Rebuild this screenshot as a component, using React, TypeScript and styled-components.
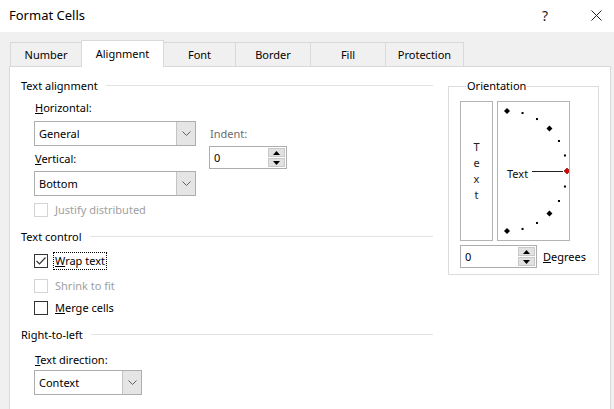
import * as React from 'react';
import styled, { createGlobalStyle } from 'styled-components';

const GlobalStyle = createGlobalStyle`
  html, body { margin: 0; padding: 0; background: #fff; }
  body {
    font-family: "Noto Sans", "Segoe UI", sans-serif;
    font-size: 11px;
    color: #000;
  }
  * { box-sizing: border-box; }
`;

const Window = styled.div`
  width: 614px;
  height: 409px;
  overflow: hidden;
  display: flex;
  flex-direction: column;
  background: #fff;
`;

const TitleBar = styled.header`
  flex: none;
  height: 32px;
  display: flex;
  align-items: center;
  padding: 0 11px 2px 9px;
`;

const Title = styled.h1`
  flex: 1;
  margin: 0;
  font-size: 13px;
  font-weight: 400;
  color: #000;
`;

const TitleButton = styled.div<{ $gap?: number }>`
  width: 14px;
  height: 14px;
  display: flex;
  align-items: center;
  justify-content: center;
  margin-right: ${({ $gap }) => $gap || 0}px;
  font-size: 14px;
  color: #222;
`;

const Body = styled.div`
  flex: 1;
  min-height: 0;
  display: flex;
  flex-direction: column;
  background: #f0f0f0;
  padding: 8px 3px 0 9px;
`;

const TabRow = styled.div`
  display: flex;
  align-items: flex-end;
  margin: 0 0 -1px 1px;
  position: relative;
  z-index: 1;
`;

const Tab = styled.div<{ $w: number; $active?: boolean }>`
  width: ${({ $w }) => $w}px;
  height: ${({ $active }) => ($active ? 27 : 24)}px;
  margin-bottom: ${({ $active }) => ($active ? 0 : 1)}px;
  margin-left: -1px;
  display: flex;
  align-items: center;
  justify-content: center;
  padding-bottom: ${({ $active }) => ($active ? 2 : 0)}px;
  border: 1px solid #d9d9d9;
  border-bottom: none;
  background: ${({ $active }) => ($active ? '#fff' : '#f0f0f0')};
  color: #000;

  &:first-child { margin-left: 0; }
`;

const Panel = styled.main`
  flex: 1;
  display: flex;
  align-items: flex-start;
  gap: 15px;
  padding: 11px 0 0 11px;
  background: #fff;
  border: 1px solid #d9d9d9;
  border-bottom: none;
`;

const LeftColumn = styled.div`
  width: 412px;
  display: flex;
  flex-direction: column;
`;

const SectionHeader = styled.div<{ $mt?: number }>`
  height: 16px;
  margin-top: ${({ $mt }) => $mt || 0}px;
  display: flex;
  align-items: center;
  gap: 8px;
  line-height: 16px;

  &::after {
    content: '';
    flex: 1;
    height: 1px;
    margin-top: -1px;
    background: #e3e3e3;
  }
`;

const AlignGrid = styled.div`
  display: flex;
  margin: 6px 0 0 13px;
`;

const FieldStack = styled.div<{ $pt?: number; $ml?: number }>`
  display: flex;
  flex-direction: column;
  padding-top: ${({ $pt }) => $pt || 0}px;
  margin-left: ${({ $ml }) => $ml || 0}px;
`;

const FieldLabel = styled.label<{ $mt?: number; $muted?: boolean; $indent?: number }>`
  display: block;
  height: 16px;
  line-height: 16px;
  margin-top: ${({ $mt }) => $mt || 0}px;
  margin-left: ${({ $indent }) => $indent || 0}px;
  padding-left: 1px;
  color: ${({ $muted }) => ($muted ? '#6d6d6d' : '#000')};
`;

const Combo = styled.div<{ $w: number; $mt?: number; $ml?: number }>`
  width: ${({ $w }) => $w}px;
  height: 25px;
  margin-top: ${({ $mt }) => $mt || 0}px;
  margin-left: ${({ $ml }) => $ml || 0}px;
  display: flex;
  align-items: stretch;
  border: 1px solid #adadad;
  background: #fff;
`;

const ComboValue = styled.span`
  flex: 1;
  display: flex;
  align-items: center;
  padding-left: 4px;
`;

const ComboButton = styled.span`
  width: 19px;
  display: flex;
  align-items: center;
  justify-content: center;
  background: #e5e5e5;
  border-left: 1px solid #c4c4c4;
`;

const Spin = styled.div<{ $w: number; $mt?: number }>`
  width: ${({ $w }) => $w}px;
  height: 23px;
  margin-top: ${({ $mt }) => $mt || 0}px;
  display: flex;
  border: 1px solid #adadad;
  background: #fff;
`;

const SpinValue = styled.span`
  flex: 1;
  display: flex;
  align-items: center;
  padding-left: 4px;
`;

const SpinButtons = styled.span`
  width: 18px;
  display: flex;
  flex-direction: column;
  gap: 1px;
  padding: 1px 1px 1px 0;
`;

const SpinButton = styled.span`
  flex: 1;
  display: flex;
  align-items: center;
  justify-content: center;
  background: #e1e1e1;
  border: 1px solid #c8c8c8;
`;

const CheckRow = styled.div<{ $mt?: number; $disabled?: boolean }>`
  height: 16px;
  margin: ${({ $mt }) => $mt || 0}px 0 0 13px;
  display: flex;
  align-items: center;
  gap: 5px;
  color: ${({ $disabled }) => ($disabled ? '#a0a0a0' : '#000')};
`;

const Box = styled.span<{ $disabled?: boolean }>`
  width: 14px;
  height: 14px;
  flex: none;
  display: flex;
  align-items: center;
  justify-content: center;
  border: 1px solid ${({ $disabled }) => ($disabled ? '#d4d4d4' : '#333')};
  background: #fff;
`;

const CheckText = styled.span<{ $focus?: boolean }>`
  line-height: 16px;
  padding: 0 1px;
  border: 1px dotted ${({ $focus }) => ($focus ? '#000' : 'transparent')};
`;

const Fieldset = styled.fieldset`
  width: 151px;
  height: 197px;
  margin: 0;
  padding: 7px 0 0 11px;
  border: 1px solid #dcdcdc;
  display: flex;
  flex-direction: column;

  legend {
    margin-left: 6px;
    padding: 0 1px;
    line-height: 16px;
  }
`;

const OrientBoxes = styled.div`
  display: flex;
  gap: 4px;
`;

const OrientBox = styled.div<{ $w: number }>`
  width: ${({ $w }) => $w}px;
  height: 140px;
  border: 1px solid #b4b4b4;
  display: flex;
  flex-direction: column;
  align-items: center;
  justify-content: center;
`;

const StackedLetter = styled.span`
  height: 16px;
  line-height: 16px;
  color: #222;
`;

const DegreesRow = styled.div`
  margin-top: 4px;
  display: flex;
  align-items: center;
  gap: 6px;
`;

const ChevronDown = () => (
  <svg width="9" height="5" viewBox="0 0 9 5">
    <polyline points="0.5,0.5 4.5,4.5 8.5,0.5" fill="none" stroke="#606060" strokeWidth="1" />
  </svg>
);

const Triangle = ({ up }: { up?: boolean }) => (
  <svg width="7" height="4" viewBox="0 0 7 4">
    <polygon points={up ? '0,4 7,4 3.5,0' : '0,0 7,0 3.5,4'} fill="#000" />
  </svg>
);

const CheckMark = () => (
  <svg width="12" height="12" viewBox="0 0 12 12">
    <polyline points="1.5,6 4.5,9 10.5,2.5" fill="none" stroke="#333" strokeWidth="1.2" />
  </svg>
);

const ComboBox = ({ value, width, mt, ml }: { value: string; width: number; mt?: number; ml?: number }) => (
  <Combo $w={width} $mt={mt} $ml={ml}>
    <ComboValue>{value}</ComboValue>
    <ComboButton><ChevronDown /></ComboButton>
  </Combo>
);

const SpinBox = ({ value, width, mt }: { value: string; width: number; mt?: number }) => (
  <Spin $w={width} $mt={mt}>
    <SpinValue>{value}</SpinValue>
    <SpinButtons>
      <SpinButton><Triangle up /></SpinButton>
      <SpinButton><Triangle /></SpinButton>
    </SpinButtons>
  </Spin>
);

const Dial = () => {
  const cx = 8;
  const cy = 69;
  const r = 60;
  const marks = [90, 75, 60, 45, 30, 15, 0, -15, -30, -45, -60, -75, -90];

  return (
    <svg width="70" height="138" viewBox="0 0 70 138">
      {marks.map(a => {
        const rad = (a * Math.PI) / 180;
        const x = cx + r * Math.cos(rad);
        const y = cy - r * Math.sin(rad);
        const big = a % 45 === 0;
        if (!big) return <rect key={a} x={x - 1} y={y - 1} width="2" height="2" fill="#000" />;
        const s = 3;
        return (
          <polygon
            key={a}
            points={`${x},${y - s} ${x + s},${y} ${x},${y + s} ${x - s},${y}`}
            fill={a === 0 ? '#e00000' : '#000'}
            stroke={a === 0 ? '#600' : 'none'}
            strokeWidth="0.6"
          />
        );
      })}
      <text x="8" y="76" fontSize="11" fontFamily="Noto Sans, sans-serif" fill="#111">Text</text>
      <line x1="33" y1="69.5" x2="64" y2="69.5" stroke="#222" strokeWidth="1" />
    </svg>
  );
};

const tabs = [
  { label: 'Number', w: 72 },
  { label: 'Alignment', w: 83, active: true },
  { label: 'Font', w: 73 },
  { label: 'Border', w: 76 },
  { label: 'Fill', w: 76 },
  { label: 'Protection', w: 79 },
];

export default function App() {
  return (
    <Window>
      <GlobalStyle />

      <TitleBar>
        <Title>Format Cells</Title>
        <TitleButton $gap={37}>?</TitleButton>
        <TitleButton>
          <svg width="11" height="11" viewBox="0 0 11 11">
            <path d="M0.5 0.5 L10.5 10.5 M10.5 0.5 L0.5 10.5" stroke="#222" strokeWidth="1" />
          </svg>
        </TitleButton>
      </TitleBar>

      <Body>
        <TabRow>
          {tabs.map(t => (
            <Tab key={t.label} $w={t.w} $active={t.active}>{t.label}</Tab>
          ))}
        </TabRow>

        <Panel>
          <LeftColumn>
            <SectionHeader>Text alignment</SectionHeader>

            <AlignGrid>
              <FieldStack>
                <FieldLabel><u>H</u>orizontal:</FieldLabel>
                <ComboBox value="General" width={162} mt={5} />
                <FieldLabel $mt={5}><u>V</u>ertical:</FieldLabel>
                <ComboBox value="Bottom" width={162} mt={4} />
              </FieldStack>
              <FieldStack $pt={26} $ml={13}>
                <FieldLabel $muted>Indent:</FieldLabel>
                <SpinBox value="0" width={78} mt={4} />
              </FieldStack>
            </AlignGrid>

            <CheckRow $mt={6} $disabled>
              <Box $disabled />
              <CheckText>Justify distributed</CheckText>
            </CheckRow>

            <SectionHeader $mt={11}>Text control</SectionHeader>

            <CheckRow $mt={8}>
              <Box><CheckMark /></Box>
              <CheckText $focus><u>W</u>rap text</CheckText>
            </CheckRow>
            <CheckRow $mt={9} $disabled>
              <Box $disabled />
              <CheckText>Shrink to fit</CheckText>
            </CheckRow>
            <CheckRow $mt={6}>
              <Box />
              <CheckText><u>M</u>erge cells</CheckText>
            </CheckRow>

            <SectionHeader $mt={11}>Right-to-left</SectionHeader>
            <FieldLabel $mt={9} $indent={13}><u>T</u>ext direction:</FieldLabel>
            <ComboBox value="Context" width={108} mt={2} ml={13} />
          </LeftColumn>

          <Fieldset>
            <legend>Orientation</legend>
            <OrientBoxes>
              <OrientBox $w={33}>
                {['T', 'e', 'x', 't'].map((c, i) => (
                  <StackedLetter key={i}>{c}</StackedLetter>
                ))}
              </OrientBox>
              <OrientBox $w={73}>
                <Dial />
              </OrientBox>
            </OrientBoxes>
            <DegreesRow>
              <SpinBox value="0" width={77} />
              <span><u>D</u>egrees</span>
            </DegreesRow>
          </Fieldset>
        </Panel>
      </Body>
    </Window>
  );
}
